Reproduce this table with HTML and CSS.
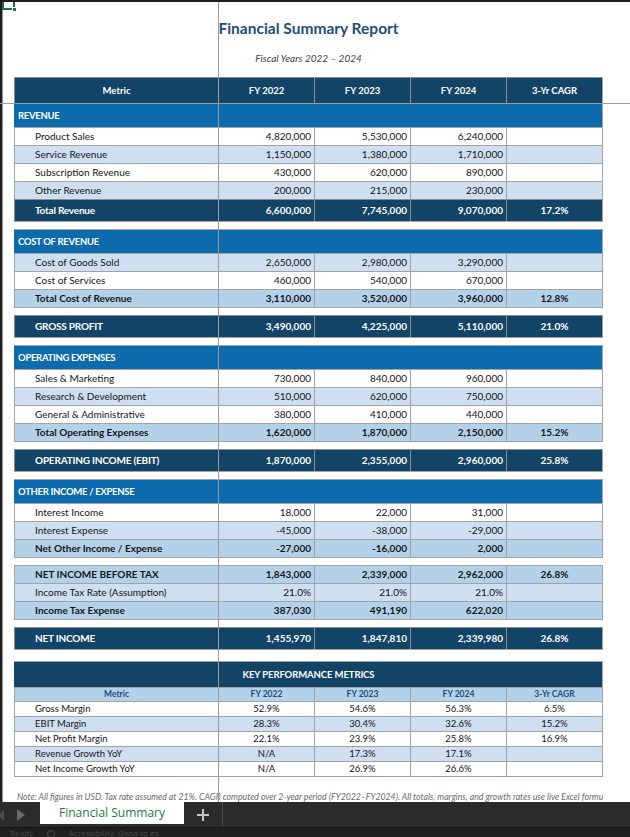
FILE: index.html
```html
<!DOCTYPE html>
<html lang="en">
<head>
    <meta charset="UTF-8">
    <meta name="viewport" content="width=device-width, initial-scale=1.0">
    <title>Financial Summary</title>
    <link rel="stylesheet" href="styles.css">
</head>
<body>
<div class="window">
    <div class="col-bar"></div>

    <div class="sheet-area">
        <div class="row-heads"></div>

        <div class="sheet">
            <!-- Title -->
            <div class="titles">
                <h1>Financial Summary Report</h1>
                <p>Fiscal Years 2022 – 2024</p>
            </div>

            <!-- Revenue -->
            <div class="block first">
                <div class="row head">
                    <div class="c">Metric</div><div class="c">FY 2022</div><div class="c">FY 2023</div><div class="c">FY 2024</div><div class="c">3-Yr CAGR</div>
                </div>
                <div class="row section"><div class="c">REVENUE</div></div>
                <div class="row">
                    <div class="c label">Product Sales</div><div class="c num">4,820,000</div><div class="c num">5,530,000</div><div class="c num">6,240,000</div><div class="c pct"></div>
                </div>
                <div class="row alt">
                    <div class="c label">Service Revenue</div><div class="c num">1,150,000</div><div class="c num">1,380,000</div><div class="c num">1,710,000</div><div class="c pct"></div>
                </div>
                <div class="row">
                    <div class="c label">Subscription Revenue</div><div class="c num">430,000</div><div class="c num">620,000</div><div class="c num">890,000</div><div class="c pct"></div>
                </div>
                <div class="row alt">
                    <div class="c label">Other Revenue</div><div class="c num">200,000</div><div class="c num">215,000</div><div class="c num">230,000</div><div class="c pct"></div>
                </div>
                <div class="row total">
                    <div class="c label">Total Revenue</div><div class="c num">6,600,000</div><div class="c num">7,745,000</div><div class="c num">9,070,000</div><div class="c pct">17.2%</div>
                </div>
            </div>

            <!-- Cost of revenue -->
            <div class="block">
                <div class="row section"><div class="c">COST OF REVENUE</div></div>
                <div class="row alt">
                    <div class="c label">Cost of Goods Sold</div><div class="c num">2,650,000</div><div class="c num">2,980,000</div><div class="c num">3,290,000</div><div class="c pct"></div>
                </div>
                <div class="row">
                    <div class="c label">Cost of Services</div><div class="c num">460,000</div><div class="c num">540,000</div><div class="c num">670,000</div><div class="c pct"></div>
                </div>
                <div class="row sub">
                    <div class="c label">Total Cost of Revenue</div><div class="c num">3,110,000</div><div class="c num">3,520,000</div><div class="c num">3,960,000</div><div class="c pct">12.8%</div>
                </div>
            </div>

            <div class="block">
                <div class="row total">
                    <div class="c label">GROSS PROFIT</div><div class="c num">3,490,000</div><div class="c num">4,225,000</div><div class="c num">5,110,000</div><div class="c pct">21.0%</div>
                </div>
            </div>

            <!-- Operating expenses -->
            <div class="block">
                <div class="row section"><div class="c">OPERATING EXPENSES</div></div>
                <div class="row">
                    <div class="c label">Sales &amp; Marketing</div><div class="c num">730,000</div><div class="c num">840,000</div><div class="c num">960,000</div><div class="c pct"></div>
                </div>
                <div class="row alt">
                    <div class="c label">Research &amp; Development</div><div class="c num">510,000</div><div class="c num">620,000</div><div class="c num">750,000</div><div class="c pct"></div>
                </div>
                <div class="row">
                    <div class="c label">General &amp; Administrative</div><div class="c num">380,000</div><div class="c num">410,000</div><div class="c num">440,000</div><div class="c pct"></div>
                </div>
                <div class="row sub">
                    <div class="c label">Total Operating Expenses</div><div class="c num">1,620,000</div><div class="c num">1,870,000</div><div class="c num">2,150,000</div><div class="c pct">15.2%</div>
                </div>
            </div>

            <div class="block">
                <div class="row total">
                    <div class="c label">OPERATING INCOME (EBIT)</div><div class="c num">1,870,000</div><div class="c num">2,355,000</div><div class="c num">2,960,000</div><div class="c pct">25.8%</div>
                </div>
            </div>

            <!-- Other income -->
            <div class="block">
                <div class="row section"><div class="c">OTHER INCOME / EXPENSE</div></div>
                <div class="row">
                    <div class="c label">Interest Income</div><div class="c num">18,000</div><div class="c num">22,000</div><div class="c num">31,000</div><div class="c pct"></div>
                </div>
                <div class="row alt">
                    <div class="c label">Interest Expense</div><div class="c num">-45,000</div><div class="c num">-38,000</div><div class="c num">-29,000</div><div class="c pct"></div>
                </div>
                <div class="row sub">
                    <div class="c label">Net Other Income / Expense</div><div class="c num">-27,000</div><div class="c num">-16,000</div><div class="c num">2,000</div><div class="c pct"></div>
                </div>
            </div>

            <!-- Tax -->
            <div class="block">
                <div class="row sub">
                    <div class="c label">NET INCOME BEFORE TAX</div><div class="c num">1,843,000</div><div class="c num">2,339,000</div><div class="c num">2,962,000</div><div class="c pct">26.8%</div>
                </div>
                <div class="row alt">
                    <div class="c label">Income Tax Rate (Assumption)</div><div class="c num">21.0%</div><div class="c num">21.0%</div><div class="c num">21.0%</div><div class="c pct"></div>
                </div>
                <div class="row sub">
                    <div class="c label">Income Tax Expense</div><div class="c num">387,030</div><div class="c num">491,190</div><div class="c num">622,020</div><div class="c pct"></div>
                </div>
            </div>

            <div class="block">
                <div class="row total">
                    <div class="c label">NET INCOME</div><div class="c num">1,455,970</div><div class="c num">1,847,810</div><div class="c num">2,339,980</div><div class="c pct">26.8%</div>
                </div>
            </div>

            <!-- KPIs -->
            <div class="block kpi">
                <div class="row kpi-title"><div class="c">KEY PERFORMANCE METRICS</div></div>
                <div class="row kpi-head">
                    <div class="c">Metric</div><div class="c">FY 2022</div><div class="c">FY 2023</div><div class="c">FY 2024</div><div class="c">3-Yr CAGR</div>
                </div>
                <div class="row">
                    <div class="c label">Gross Margin</div><div class="c pct">52.9%</div><div class="c pct">54.6%</div><div class="c pct">56.3%</div><div class="c pct">6.5%</div>
                </div>
                <div class="row alt">
                    <div class="c label">EBIT Margin</div><div class="c pct">28.3%</div><div class="c pct">30.4%</div><div class="c pct">32.6%</div><div class="c pct">15.2%</div>
                </div>
                <div class="row">
                    <div class="c label">Net Profit Margin</div><div class="c pct">22.1%</div><div class="c pct">23.9%</div><div class="c pct">25.8%</div><div class="c pct">16.9%</div>
                </div>
                <div class="row alt">
                    <div class="c label">Revenue Growth YoY</div><div class="c pct">N/A</div><div class="c pct">17.3%</div><div class="c pct">17.1%</div><div class="c pct"></div>
                </div>
                <div class="row">
                    <div class="c label">Net Income Growth YoY</div><div class="c pct">N/A</div><div class="c pct">26.9%</div><div class="c pct">26.6%</div><div class="c pct"></div>
                </div>
            </div>

            <p class="note">Note: All figures in USD. Tax rate assumed at 21%. CAGR computed over 2-year period (FY2022–FY2024). All totals, margins, and growth rates use live Excel formulas.</p>
        </div>

        <!-- frozen panes + selected cell -->
        <div class="freeze-v"></div>
        <div class="freeze-h"></div>
        <div class="selection"><span class="handle"></span></div>
    </div>

    <div class="tabbar">
        <svg class="arrow-l" width="6" height="12" viewBox="0 0 6 12"><path d="M5 0 L0 6 L5 12 Z" fill="#4d4d4d"/></svg>
        <svg class="arrow-r" width="8" height="12" viewBox="0 0 8 12"><path d="M0 0 L8 6 L0 12 Z" fill="#6b6b6b"/></svg>
        <div class="tab">Financial Summary</div>
        <svg class="plus" width="12" height="12" viewBox="0 0 12 12"><path d="M6 0 V12 M0 6 H12" stroke="#c4c4c4" stroke-width="2"/></svg>
        <div class="divider"></div>
    </div>
    <div class="status">
        <span>Ready</span><span class="dot"></span><span>Accessibility: Good to go</span>
    </div>
</div>
</body>
</html>
```

FILE: styles.css
```css
* {
    box-sizing: border-box;
    margin: 0;
    padding: 0;
}

body {
    width: 630px;
    height: 837px;
    overflow: hidden;
    background: #ffffff;
    font-family: Lato, "Liberation Sans", sans-serif;
    color: #151515;
}

.window {
    display: flex;
    flex-direction: column;
    height: 837px;
}

.col-bar {
    height: 2px;
    background: #1e1e1e;
}

.sheet-area {
    position: relative;
    height: 800px;
    display: flex;
    overflow: hidden;
}

.row-heads {
    width: 3px;
    background: #1e1e1e;
    border-right: 1px solid #8f8f8f;
}

.sheet {
    flex: 1;
    padding-left: 11px;
}

/* title */
.titles {
    width: 589px;
    height: 75px;
    text-align: center;
}

.titles h1 {
    padding-top: 16px;
    font-size: 15.5px;
    line-height: 20px;
    font-weight: 700;
    color: #1f4e79;
}

.titles p {
    margin-top: 14px;
    font-size: 10px;
    line-height: 12px;
    font-style: italic;
    color: #404040;
}

/* table blocks */
.block {
    width: 589px;
    border-right: 1px solid #a3a3a3;
    border-bottom: 1px solid #a3a3a3;
    margin-top: 7px;
}

.block.first {
    margin-top: 0;
}

.block.kpi {
    margin-top: 11px;
}

.row {
    display: grid;
    grid-template-columns: 204px 96px 96px 96px 96px;
    height: 18px;
    border-top: 1px solid #a3a3a3;
    background: #ffffff;
}

.c {
    display: flex;
    align-items: center;
    border-left: 1px solid #a3a3a3;
    font-size: 10px;
    white-space: nowrap;
    padding-bottom: 1px;
}

.label {
    padding-left: 20px;
}

.num {
    justify-content: flex-end;
    padding-right: 3px;
}

.pct {
    justify-content: center;
}

.alt {
    background: #cddff0;
}

.sub {
    background: #b3d2ea;
    font-weight: 700;
}

.head {
    height: 26px;
    background: #124468;
    border-color: #8c8c8c;
}

.head .c {
    justify-content: center;
    color: #ffffff;
    font-weight: 700;
    font-size: 9.5px;
    border-color: #8c8c8c;
}

.section {
    height: 24px;
    background: #0b6bac;
    grid-template-columns: 1fr;
}

.section .c {
    padding-left: 3px;
    color: #ffffff;
    font-weight: 700;
    font-size: 9.5px;
    letter-spacing: -0.3px;
    border-left-color: #0b6bac;
}

.total {
    height: 22px;
    background: #124468;
    border-color: #8c8c8c;
}

.total .c {
    color: #ffffff;
    font-weight: 700;
    border-color: #8c8c8c;
}

.total .label {
    letter-spacing: -0.2px;
}

/* key metrics */
.kpi .row {
    height: 15px;
}

.kpi .c {
    font-size: 9.5px;
}

.kpi .kpi-title {
    height: 26px;
    background: #124468;
    grid-template-columns: 1fr;
}

.kpi-title .c {
    justify-content: center;
    color: #ffffff;
    font-weight: 700;
    font-size: 9.5px;
    letter-spacing: -0.1px;
    border-left-color: #124468;
}

.kpi .kpi-head {
    height: 14px;
    background: #b3d2ea;
}

.kpi-head .c {
    justify-content: center;
    color: #1f4e79;
    font-weight: 700;
    font-size: 8.5px;
}

.note {
    width: 589px;
    margin-top: 14px;
    padding-left: 3px;
    font-size: 8.7px;
    line-height: 12px;
    font-style: italic;
    color: #6b6b6b;
    white-space: nowrap;
    overflow: hidden;
}

/* frozen pane lines and active cell */
.freeze-v {
    position: absolute;
    left: 218px;
    top: 0;
    width: 1px;
    height: 800px;
    background: #9a9a9a;
}

.freeze-h {
    position: absolute;
    left: 0;
    top: 101px;
    width: 630px;
    height: 1px;
    background: #9a9a9a;
}

.selection {
    position: absolute;
    left: 2px;
    top: -2px;
    width: 13px;
    height: 10px;
    border: 2px solid #1e6e42;
}

.handle {
    position: absolute;
    right: -4px;
    bottom: -4px;
    width: 5px;
    height: 5px;
    background: #1e6e42;
    border: 1px solid #ffffff;
}

/* sheet tabs */
.tabbar {
    position: relative;
    height: 25px;
    background: #2b2b2b;
    display: flex;
    align-items: flex-start;
}

.arrow-l {
    position: absolute;
    left: -1px;
    top: 7px;
}

.arrow-r {
    position: absolute;
    left: 17px;
    top: 7px;
}

.tab {
    margin-left: 40px;
    width: 144px;
    height: 22px;
    background: #ffffff;
    color: #1e7b48;
    font-family: "Open Sans", "Liberation Sans", sans-serif;
    font-size: 12px;
    line-height: 22px;
    text-align: center;
}

.plus {
    margin-left: 13px;
    margin-top: 7px;
}

.divider {
    margin-left: 13px;
    width: 1px;
    height: 25px;
    background: #4a4a4a;
}

.status {
    height: 10px;
    background: #1f1f1f;
    border-top: 1px solid #111111;
    display: flex;
    gap: 14px;
    padding-left: 10px;
    font-family: "Open Sans", sans-serif;
    font-size: 8px;
    line-height: 10px;
    color: #4a4a4a;
    overflow: hidden;
}

.status .dot {
    width: 8px;
    height: 8px;
    margin-top: 2px;
    border-radius: 50%;
    border: 1px solid #4a4a4a;
}
```
